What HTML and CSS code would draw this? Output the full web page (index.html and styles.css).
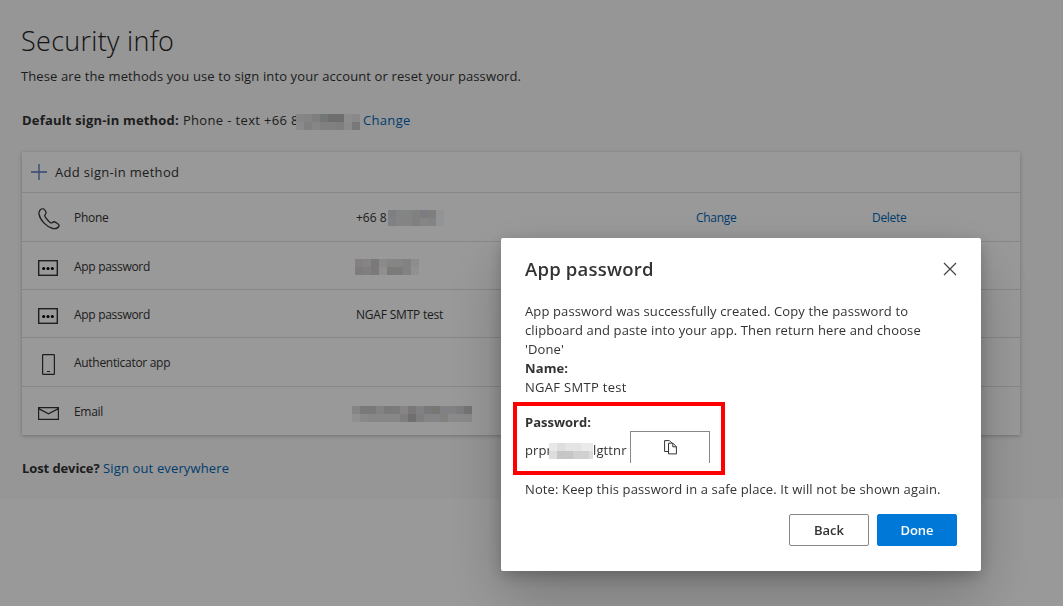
FILE: index.html
```
<!DOCTYPE html>
<html>
	<head>
		<meta charset="utf-8">
		<title>Security info</title>

		<link rel="stylesheet" href="styles.css">

	</head>

	<body>
		<div id="main">
			<h1>Security info</h1>
			<p class="desc">These are the methods you use to sign into your account or reset your password.</p>

			<div class="default-method">
				<b>Default sign-in method:</b>
				<span class="value">Phone - text +66 8</span>
				<span class="mosaic m1"></span>
				<a href="#">Change</a>
			</div>

			<div class="methods">
				<div class="add">
					<svg width="16" height="16" viewBox="0 0 16 16"><path d="M8 0v16M0 8h16" stroke="#5577c0" stroke-width="1.3"/></svg>
					<span>Add sign-in method</span>
				</div>
				<div class="row first">
					<span class="icon">
						<svg width="24" height="24" viewBox="0 0 24 24"><path d="M4.600 1.600C6 1.200 7 3.200 7.800 4.600c.8 1.500.4 2.200-.5 3-.8.7-.7 1.500 0 2.500 1.500 2.100 2.700 3.600 4.800 5.300.9.7 1.600.7 2.400 0 1-.9 2-.9 3.200 0 1.300.9 3.900 2 3.400 3.400-.9 2.400-3.900 3.200-6.400 2.700C9 20.200 2 13.300 1 7.200.6 4.800 2 2 4.600 1.600z" fill="none" stroke="#333" stroke-width="1.300"/></svg>
					</span>
					<span class="name">Phone</span>
					<span class="info">+66 8<i class="mosaic m2"></i></span>
					<a href="#" class="change">Change</a>
					<a href="#" class="delete">Delete</a>
				</div>
				<div class="row">
					<span class="icon">
						<svg width="20" height="16" viewBox="0 0 20 16"><rect x=".7" y=".7" width="18.600" height="14.600" fill="none" stroke="#333" stroke-width="1.400"/><circle cx="5.700" cy="8.500" r="1.500"/><circle cx="10" cy="8.500" r="1.500"/><circle cx="14.300" cy="8.500" r="1.500"/></svg>
					</span>
					<span class="name">App password</span>
					<span class="info"><i class="mosaic m3"></i></span>
				</div>
				<div class="row">
					<span class="icon">
						<svg width="20" height="16" viewBox="0 0 20 16"><rect x=".7" y=".7" width="18.600" height="14.600" fill="none" stroke="#333" stroke-width="1.400"/><circle cx="5.700" cy="8.500" r="1.500"/><circle cx="10" cy="8.500" r="1.500"/><circle cx="14.300" cy="8.500" r="1.500"/></svg>
					</span>
					<span class="name">App password</span>
					<span class="info">NGAF SMTP test</span>
				</div>
				<div class="row tall">
					<span class="icon phone">
						<svg width="13" height="21" viewBox="0 0 13 21"><rect x=".6" y=".6" width="11.800" height="19.800" rx=".6" fill="none" stroke="#333" stroke-width="1.200"/><path d="M5 17.500h3" stroke="#333"/></svg>
					</span>
					<span class="name">Authenticator app</span>
				</div>
				<div class="row last">
					<span class="icon">
						<svg width="21" height="13" viewBox="0 0 21 13"><path d="M.6.6h19.800v11.800H.6zM.6 1.600l9.900 5.200 9.900-5.200" fill="none" stroke="#333" stroke-width="1.200"/></svg>
					</span>
					<span class="name">Email</span>
					<span class="info"><i class="mosaic m4"></i></span>
				</div>
			</div>

			<div class="lost"><b>Lost device?</b> <a href="#">Sign out everywhere</a></div>
		</div>

		<div id="overlay">
			<div class="dialog">
				<div class="title">
					<h2>App password</h2>
					<svg width="14" height="14" viewBox="0 0 14 14"><path d="M1 1l12 12M13 1L1 13" stroke="#444" stroke-width="1.200"/></svg>
				</div>
				<div class="text">
					<div>App password was successfully created. Copy the password to</div>
					<div>clipboard and paste into your app. Then return here and choose</div>
					<div>'Done'</div>
					<b>Name:</b>
					<div class="app-name">NGAF SMTP test</div>
				</div>
				<div class="password">
					<b>Password:</b>
					<div class="pw-row">
						<span>prpr</span><i class="mosaic m5"></i><span class="pw-end">lgttnr</span>
						<button class="copy">
							<svg width="13" height="15" viewBox="0 0 13 15"><path d="M4 11.500H.6V.6h4.800l2.300 2.300M4.500 3.200h4.400l3.500 3.500v7.200H4.500zM8.800 3.200v3.600h3.600" fill="none" stroke="#333" stroke-width="1"/></svg>
						</button>
					</div>
				</div>
				<p class="note">Note: Keep this password in a safe place. It will not be shown again.</p>
				<div class="buttons">
					<button>Back</button>
					<button class="done">Done</button>
				</div>
			</div>
		</div>
	</body>
</html>
```
FILE: styles.css
```
* {
	margin: 0;
	padding: 0;
	box-sizing: border-box;
}
body {
	font-family: "Open Sans", "Noto Sans", sans-serif;
	font-size: 13px;
	line-height: 19px;
	letter-spacing: .12px;
	color: #333;
	background: #fff;
	overflow: hidden;
}
a {
	color: #0067b8;
	text-decoration: none;
}
#main {
	height: 499px;
	padding: 22px 43px 0 22px;
	background: #fafafa;
}
h1 {
	margin-left: -1px;
	font-size: 27px;
	font-weight: 300;
	line-height: 38px;
	letter-spacing: .3px;
	color: #222;
}
.desc {
	margin: 7px 0 0 -1px;
}
.default-method {
	display: flex;
	align-items: center;
	margin-top: 24px;
	height: 20px;
}
.default-method b {
	letter-spacing: .18px;
}
.default-method .value {
	width: 120px;
	margin: 0 -7px 0 4px;
	letter-spacing: .35px;
	white-space: nowrap;
}
.default-method a {
	margin-left: 3px;
	letter-spacing: .35px;
}
.methods {
	width: 998px;
	height: 283px;
	margin-top: 22px;
	background: #fff;
	box-shadow: 0 1px 4px rgba(0,0,0,.25);
}
.add {
	display: flex;
	align-items: center;
	height: 41px;
	padding-left: 9px;
	letter-spacing: .32px;
	border-bottom: 1px solid #e0e0e0;
}
.add span {
	margin-left: 8px;
}
.row {
	display: grid;
	grid-template-columns: 52px 282px 340px 176px 1fr;
	align-items: center;
	height: 48px;
	font-size: 12px;
	letter-spacing: -.3px;
	border-bottom: 1px solid #e0e0e0;
}
.row.first, .row.tall {
	height: 49px;
}
.row.last {
	border-bottom: 0;
}
.row .icon {
	display: flex;
	padding: 4px 0 0 16px;
}
.row .icon.phone {
	padding-left: 20px;
}
.row .name, .row .info, .row a {
	padding-top: 2px;
}
.row.first .name, .row.first .info, .row.first a, .row.tall .name, .row.last .name {
	padding-top: 1px;
}
.row .info {
	display: flex;
	align-items: center;
	letter-spacing: -.2px;
}
.row.first .info {
	letter-spacing: 0;
}
.lost {
	margin-top: 24px;
}
.lost b {
	letter-spacing: -.1px;
}
.lost a {
	letter-spacing: .14px;
}

/* pixelated private values, 8px cells */
.mosaic {
	display: block;
	position: relative;
	height: 16px;
	background-repeat: no-repeat;
	background-size: 100% 8px;
	background-position: 0 0, 0 8px;
}
.m1 {
	width: 64px;
	margin-top: 3px;
	background-image:
		linear-gradient(90deg, #e0e0e0 8px, #dcdcdc 0 16px, #d2d2d2 0 24px, #c0c5c5 0 32px, #b8b8b8 0 48px, #ececec 0 56px, #e4e4e4 0),
		linear-gradient(90deg, #e6e6e6 8px, #d6d6d6 0 16px, #dfdfdf 0 24px, #d6d6d6 0 40px, #d2d2d2 0 48px, #e8e8e8 0 56px, #c8c8c8 0);
}
.m2 {
	width: 56px;
	margin-left: 1px;
	background-image:
		linear-gradient(90deg, #d2d4da 8px, #dbdede 0 24px, #d8d8d4 0 32px, #ced0d6 0 40px, #d4d4d6 0 48px, #f5f7fb 0),
		linear-gradient(90deg, #d6d8dc 8px, #dcdcdc 0 24px, #d8d6d2 0 32px, #dedede 0 40px, #dadadb 0 48px, #f5f7fb 0);
}
.m3 {
	width: 64px;
	margin-left: -1px;
	background-image:
		linear-gradient(90deg, #dcd8d8 8px, #dfdddd 0 16px, #ceccc8 0 24px, #e4e6e6 0 32px, #dedfdd 0 48px, #d8dbda 0 56px, #ececec 0),
		linear-gradient(90deg, #d4d0ce 8px, #d6d3d3 0 16px, #ceccc8 0 24px, #eee 0 32px, #cececc 0 48px, #d8dbdb 0 56px, #f2f2f2 0);
}
.m4 {
	width: 120px;
	margin: 3px 0 0 -4px;
	background-image:
		linear-gradient(90deg, #dfdddd 8px, #cacacb 0 24px, #d5d9dc 0 32px, #cacecd 0 40px, #cecece 0 48px, #dedede 0 56px, #cbc8ca 0 64px, #d8d8da 0 72px, #c9cacc 0 80px, #c6c6c4 0 88px, #d6d8dc 0 104px, #d2d2d4 0 112px, #c0c2c5 0),
		linear-gradient(90deg, #f2f0f0 8px, #e6e5e4 0 16px, #e2e2e2 0 48px, #d4d3d2 0 56px, #bcb9b7 0 64px, #d4d2d4 0 72px, #dcdcdf 0 88px, #d8d8d6 0 96px, #e6e6e6 0);
}
.m5 {
	width: 44px;
	margin-left: -3px;
	background-image:
		linear-gradient(90deg, #e8e8e8 8px, #dedede 0 16px, #e4e4e4 0 32px, #eaeaea 0),
		linear-gradient(90deg, #dcdcdc 8px, #c6c6c6 0 24px, #d0d0d0 0 40px, #dcdcdc 0);
}

#overlay {
	position: fixed;
	top: 0;
	left: 0;
	width: 100%;
	height: 100%;
	padding: 238px 0 0 501px;
	background: rgba(0,0,0,.4);
}
.dialog {
	width: 480px;
	height: 333px;
	padding: 17px 24px 0;
	background: #fff;
	border-radius: 2px;
	box-shadow: 0 26px 58px rgba(0,0,0,.22), 0 5px 15px rgba(0,0,0,.22);
}
.title {
	display: flex;
	align-items: center;
	justify-content: space-between;
	height: 28px;
}
.title h2 {
	margin-top: -2px;
	font-size: 18.500px;
	font-weight: 600;
	letter-spacing: .2px;
}
.text {
	margin-top: 19px;
	white-space: nowrap;
}
.text b {
	display: block;
}
.app-name {
	letter-spacing: .3px;
}
.password {
	position: relative;
	margin-top: 16px;
}
/* red frame around the password */
.password:before {
	content: "";
	position: absolute;
	top: -11px;
	left: -12px;
	width: 212px;
	height: 73px;
	border: 4px solid #f00;
	box-sizing: border-box;
}
.password b {
	display: block;
	letter-spacing: 0;
}
.pw-row {
	display: flex;
	align-items: center;
	height: 32px;
	margin-top: -1px;
}
.pw-row span, .pw-row i {
	margin-top: 7px;
}
.pw-row span:first-child {
	width: 27px;
}
.pw-end {
	width: 34px;
}
button {
	width: 80px;
	height: 32px;
	font: 600 13px "Open Sans", sans-serif;
	color: #333;
	background: #fff;
	border: 1px solid #8a8886;
	border-radius: 2px;
}
.copy {
	height: 32px;
	padding-top: 3px;
	margin-left: 3px;
	border-bottom: 0;
	border-radius: 0;
}
.note {
	margin-top: 17px;
	white-space: nowrap;
}
.buttons {
	display: flex;
	justify-content: flex-end;
	gap: 8px;
	margin-top: 15px;
}
.buttons .done {
	color: #fff;
	background: #0078d7;
	border-color: #0078d7;
}
```
